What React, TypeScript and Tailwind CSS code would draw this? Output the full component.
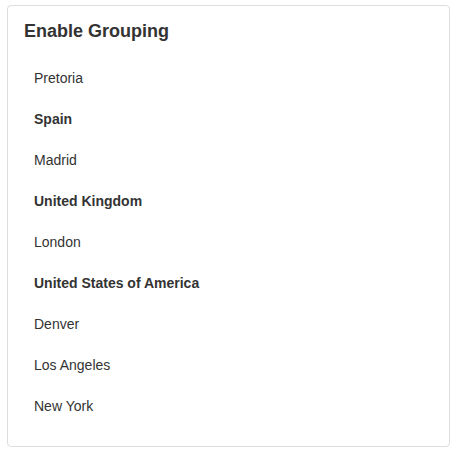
export default function App() {
  const rows = [
    { label: 'Pretoria', group: false },
    { label: 'Spain', group: true },
    { label: 'Madrid', group: false },
    { label: 'United Kingdom', group: true },
    { label: 'London', group: false },
    { label: 'United States of America', group: true },
    { label: 'Denver', group: false },
    { label: 'Los Angeles', group: false },
    { label: 'New York', group: false },
  ];

  return (
    <div className="pt-[5px] pl-[7px]" style={{ fontFamily: '"Liberation Sans", Arial, sans-serif' }}>
      <div className="w-[443px] h-[442px] border border-[#dddddd] rounded-[4px] bg-white pt-[15px] pl-[16px] pr-[16px]">
        <h1 className="text-[18px] leading-[20px] font-bold text-[#333333]">Enable Grouping</h1>
        <ul className="mt-[17px]">
          {rows.map(r => (
            <li key={r.label} className={`h-[41px] flex items-center pl-[10px] text-[14px] text-[#333333] ${r.group ? 'font-bold' : ''}`}>
              {r.label}
            </li>
          ))}
        </ul>
      </div>
    </div>
  );
}
